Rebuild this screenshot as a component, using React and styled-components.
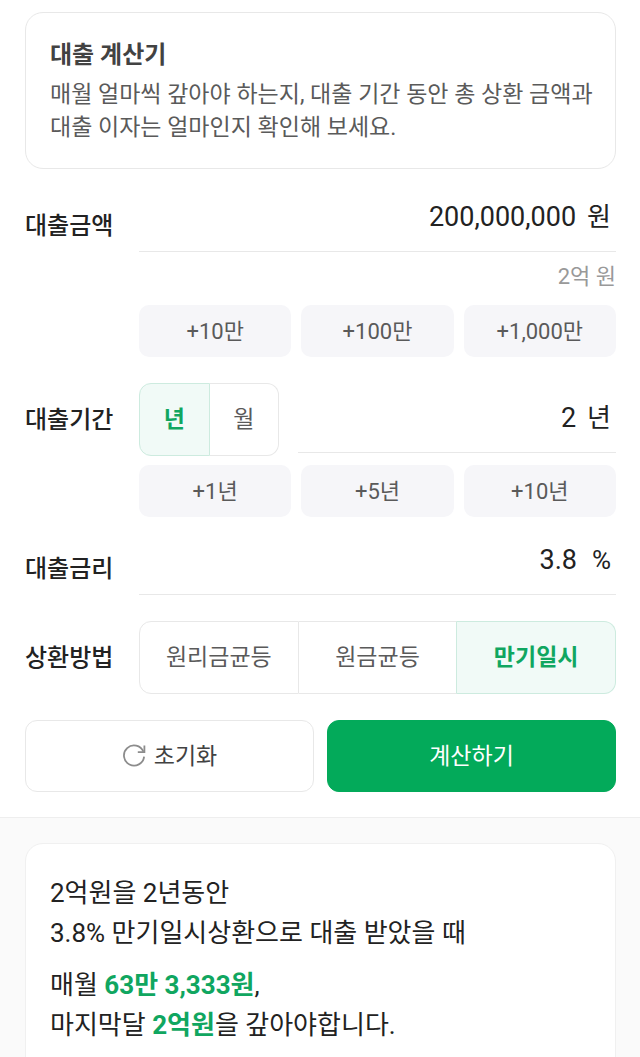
import React, { useState } from "react";
import styled, { createGlobalStyle, css } from "styled-components";

const GlobalStyle = createGlobalStyle`
  * {
    box-sizing: border-box;
  }

  body {
    margin: 0;
    background-color: #fff;
    color: #222;
    font-family: Roboto, "Noto Sans CJK KR", sans-serif;
    word-break: keep-all;
  }

  button,
  input {
    font-family: inherit;
    color: inherit;
  }
`;

const Calculator = styled.form`
  display: flex;
  flex-direction: column;
  gap: 26px;
  padding: 12px 24px 25px 25px;
`;

const Intro = styled.section`
  margin-bottom: 5px;
  padding: 25px 16px 24px 24px;
  border: 1px solid #e8e8e8;
  border-radius: 18px;
`;

const Title = styled.h1`
  margin: 0 0 5px;
  font-size: 24px;
  font-weight: 700;
  line-height: 35px;
  color: #424242;
`;

const Description = styled.p`
  margin: 0;
  font-size: 23px;
  line-height: 33px;
  color: #5a5a5a;
`;

const Row = styled.div`
  display: grid;
  grid-template-columns: 114px minmax(0, 1fr);
  align-items: center;
`;

const labelText = css`
  font-size: 24px;
  font-weight: 500;
  line-height: 34px;
`;

const Label = styled.label`
  ${labelText}
`;

const GroupLabel = styled.span`
  ${labelText}
`;

const Field = styled.div`
  display: flex;
  flex: 1;
  min-width: 0;
  gap: 11px;
  padding: 0 5px 17px 0;
  border-bottom: 1px solid #e8e8e8;
  font-size: 26px;
  line-height: 34px;
`;

const Input = styled.input`
  flex: 1;
  min-width: 0;
  height: 34px;
  padding: 0;
  border: none;
  outline: none;
  background: transparent;
  font-size: 27px;
  text-align: right;
`;

const Unit = styled.span`
  min-width: 23px;
  height: 34px;
  text-align: right;
`;

const Helper = styled.p`
  grid-column: 2;
  margin: 8px 0 3px;
  font-size: 22px;
  line-height: 33px;
  text-align: right;
  color: #999;
`;

const Chips = styled.div`
  grid-column: 2;
  display: grid;
  grid-template-columns: repeat(3, 1fr);
  gap: 10px;
  margin-top: 9px;
`;

const Chip = styled.button`
  height: 52px;
  padding: 0;
  border: none;
  border-radius: 10px;
  background-color: #f6f6f9;
  color: #5a5a5a;
  font-size: 22px;
  line-height: 33px;
  cursor: pointer;
`;

const Period = styled.div`
  display: flex;
  align-items: flex-end;
  gap: 19px;
`;

const PeriodField = styled.div`
  display: flex;
  flex: 1;
  min-width: 0;
  padding-bottom: 3px;
`;

const Segments = styled.div`
  display: flex;
  width: ${(props) => props.$width || "100%"};
`;

const Segment = styled.label`
  display: flex;
  flex: 1;
  align-items: center;
  justify-content: center;
  height: 73px;
  border: 1px solid #e8e8e8;
  color: #5a5a5a;
  font-size: 23px;
  line-height: 33px;
  cursor: pointer;

  & + & {
    border-left: none;
  }

  &:first-child {
    border-radius: 12px 0 0 12px;
  }

  &:last-child {
    border-radius: 0 12px 12px 0;
  }

  &:has(input:checked) {
    border-color: #cdebdf;
    background-color: #f1faf7;
    color: #10a660;
    font-weight: 700;
  }

  &:has(+ & input:checked) {
    border-right-color: #cdebdf;
  }
`;

const Radio = styled.input`
  appearance: none;
  width: 0;
  height: 0;
  margin: 0;
`;

const Actions = styled.div`
  display: grid;
  grid-template-columns: 1fr 1fr;
  gap: 13px;
`;

const Button = styled.button`
  display: flex;
  align-items: center;
  justify-content: center;
  gap: 8px;
  height: 72px;
  border: 1px solid ${(props) => (props.$primary ? "#03aa5a" : "#e8e8e8")};
  border-radius: 12px;
  background-color: ${(props) => (props.$primary ? "#03aa5a" : "#fff")};
  color: ${(props) => (props.$primary ? "#fff" : "#424242")};
  font-size: 23px;
  line-height: 33px;
  cursor: pointer;
`;

const ResultArea = styled.section`
  padding: 25px 24px 25px 25px;
  border-top: 1px solid #eee;
  background-color: #fafafa;
`;

const ResultCard = styled.div`
  display: flex;
  flex-direction: column;
  gap: 12px;
  padding: 29px 24px;
  border: 1px solid #f0f0f0;
  border-radius: 18px;
  background-color: #fff;
`;

const ResultText = styled.p`
  margin: 0;
  font-size: 26px;
  line-height: 40px;
`;

const Amount = styled.strong`
  font-weight: 700;
  color: #10a660;
`;

const ResetIcon = () => (
  <svg width="24" height="24" viewBox="0 0 24 24" fill="none" stroke="#8c8c8c" strokeWidth="1.8" aria-hidden="true">
    <path d="M21.4 7.6A10.1 10.1 0 1 0 22.1 12.6" />
    <path d="M22.4 1.6V8.2H15.8" />
  </svg>
);

const Option = ({ name, value, current, onSelect }) => (
  <Segment>
    <Radio
      type="radio"
      name={name}
      value={value}
      checked={current === value}
      onChange={() => onSelect(value)}
    />
    {value}
  </Segment>
);

const App = () => {
  const [amount, setAmount] = useState(200000000);
  const [period, setPeriod] = useState(2);
  const [rate, setRate] = useState("3.8");
  const [unit, setUnit] = useState("년");
  const [method, setMethod] = useState("만기일시");

  const toNumber = (text) => Number(text.replace(/\D/g, ""));

  const handleReset = () => {
    setAmount(0);
    setPeriod(0);
    setRate("");
  };

  return (
    <>
      <GlobalStyle />
      <main>
        <Calculator onSubmit={(e) => e.preventDefault()}>
          <Intro>
            <Title>대출 계산기</Title>
            <Description>
              매월 얼마씩 갚아야 하는지, 대출 기간 동안 총 상환 금액과 대출 이자는 얼마인지 확인해 보세요.
            </Description>
          </Intro>

          <Row>
            <Label htmlFor="amount">대출금액</Label>
            <Field>
              <Input
                id="amount"
                inputMode="numeric"
                value={amount.toLocaleString("en-US")}
                onChange={(e) => setAmount(toNumber(e.target.value))}
              />
              <Unit>원</Unit>
            </Field>
            <Helper>2억 원</Helper>
            <Chips>
              <Chip type="button" onClick={() => setAmount(amount + 100000)}>+10만</Chip>
              <Chip type="button" onClick={() => setAmount(amount + 1000000)}>+100만</Chip>
              <Chip type="button" onClick={() => setAmount(amount + 10000000)}>+1,000만</Chip>
            </Chips>
          </Row>

          <Row>
            <Label htmlFor="period">대출기간</Label>
            <Period>
              <Segments $width="140px">
                <Option name="unit" value="년" current={unit} onSelect={setUnit} />
                <Option name="unit" value="월" current={unit} onSelect={setUnit} />
              </Segments>
              <PeriodField>
                <Field>
                  <Input
                    id="period"
                    inputMode="numeric"
                    value={period}
                    onChange={(e) => setPeriod(toNumber(e.target.value))}
                  />
                  <Unit>{unit}</Unit>
                </Field>
              </PeriodField>
            </Period>
            <Chips>
              <Chip type="button" onClick={() => setPeriod(period + 1)}>+1년</Chip>
              <Chip type="button" onClick={() => setPeriod(period + 5)}>+5년</Chip>
              <Chip type="button" onClick={() => setPeriod(period + 10)}>+10년</Chip>
            </Chips>
          </Row>

          <Row>
            <Label htmlFor="rate">대출금리</Label>
            <Field>
              <Input
                id="rate"
                inputMode="decimal"
                value={rate}
                onChange={(e) => setRate(e.target.value)}
              />
              <Unit>%</Unit>
            </Field>
          </Row>

          <Row role="radiogroup" aria-labelledby="method">
            <GroupLabel id="method">상환방법</GroupLabel>
            <Segments>
              <Option name="method" value="원리금균등" current={method} onSelect={setMethod} />
              <Option name="method" value="원금균등" current={method} onSelect={setMethod} />
              <Option name="method" value="만기일시" current={method} onSelect={setMethod} />
            </Segments>
          </Row>

          <Actions>
            <Button type="button" onClick={handleReset}>
              <ResetIcon />
              초기화
            </Button>
            <Button type="submit" $primary>계산하기</Button>
          </Actions>
        </Calculator>

        <ResultArea>
          <ResultCard>
            <ResultText>
              2억원을 2년동안
              <br />
              3.8% 만기일시상환으로 대출 받았을 때
            </ResultText>
            <ResultText>
              매월 <Amount>63만 3,333원</Amount>,
              <br />
              마지막달 <Amount>2억원</Amount>을 갚아야합니다.
            </ResultText>
          </ResultCard>
        </ResultArea>
      </main>
    </>
  );
};

export default App;
